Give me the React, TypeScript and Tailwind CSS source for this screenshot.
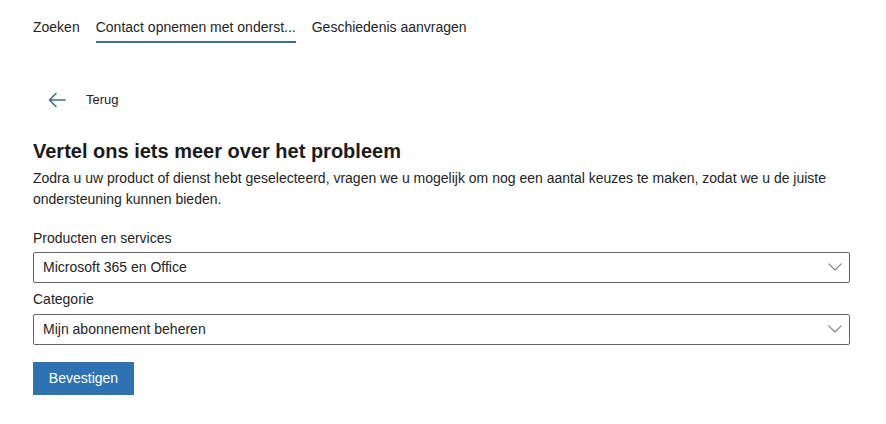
const font = { fontFamily: '"Liberation Sans", Arial, sans-serif' }

function Chevron() {
  return (
    <svg width="14" height="8" viewBox="0 0 14 8" fill="none" stroke="#808080" strokeWidth="1.1" strokeLinecap="round" strokeLinejoin="round">
      <path d="M0.7 0.8L7 7L13.3 0.8" />
    </svg>
  )
}

function Select({ value }: { value: string }) {
  return (
    <div className="flex h-[31px] items-center justify-between rounded-[2px] border border-[#666666] bg-white pl-[9px] pr-[7px] text-[14px] text-[#242424]">
      <span>{value}</span>
      <Chevron />
    </div>
  )
}

export default function App() {
  return (
    <div className="h-[424px] w-[886px] bg-white text-[#242424]" style={font}>
      {/* Tabs */}
      <div className="flex gap-[16px] px-[33px] pt-[17px] text-[14px] leading-[20px]">
        <div className="pb-[6px]">Zoeken</div>
        <div className="border-b-2 border-[#3f6d8c] pb-[4px]">Contact opnemen met onderst...</div>
        <div className="pb-[6px]">Geschiedenis aanvragen</div>
      </div>

      {/* Back */}
      <div className="mt-[47px] flex items-center gap-[20px] pl-[48px] text-[13px]">
        <svg width="18" height="16" viewBox="0 0 18 16" fill="none" stroke="#3f6d8c" strokeWidth="1.6" strokeLinecap="round" strokeLinejoin="round">
          <path d="M17 8H1.5M8 1.5L1.5 8l6.5 6.5" />
        </svg>
        <span>Terug</span>
      </div>

      <div className="px-[33px] pt-[27px]">
        <h1 className="text-[20px] font-bold leading-[28px] text-[#1b1b1b]">Vertel ons iets meer over het probleem</h1>
        <p className="mt-[3px] w-[800px] text-[14px] leading-[21px]">
          Zodra u uw product of dienst hebt geselecteerd, vragen we u mogelijk om nog een aantal keuzes te maken, zodat we u de juiste ondersteuning kunnen bieden.
        </p>
        <div className="mt-[18px] w-[817px]">
          <div className="mb-[4px] text-[14px] leading-[20px]">Producten en services</div>
          <Select value="Microsoft 365 en Office" />
          <div className="mb-[5px] mt-[6px] text-[14px] leading-[20px]">Categorie</div>
          <Select value="Mijn abonnement beheren" />
        </div>
        <button className="mt-[17px] h-[33px] w-[101px] bg-[#2f72b3] text-[14px] text-white">Bevestigen</button>
      </div>
    </div>
  )
}
